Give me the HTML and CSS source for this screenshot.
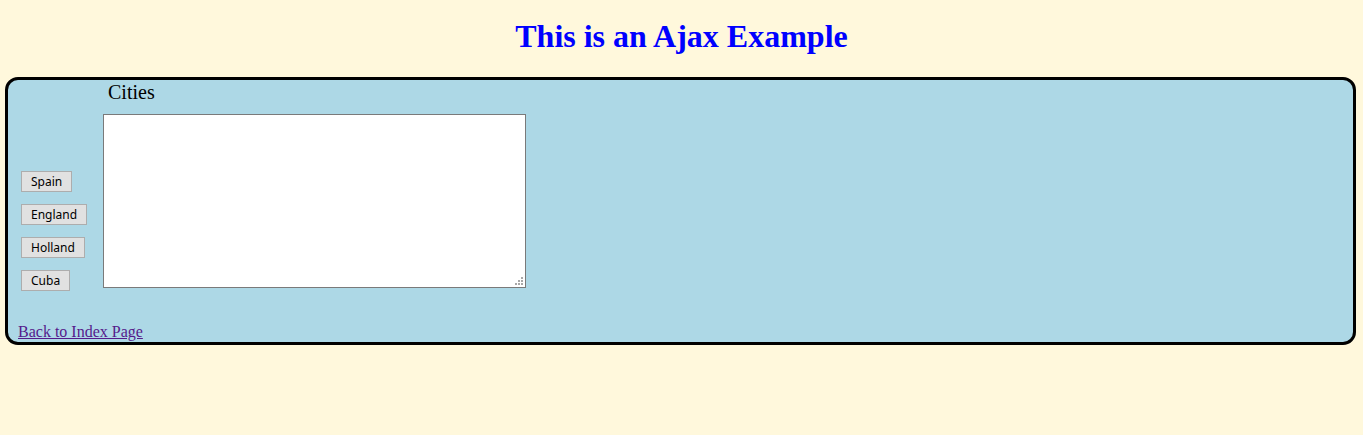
FILE: index.html
```html
<!DOCTYPE html>
<html>
<head>
<meta charset="utf-8">
<title>Ajax Example</title>
<link rel="stylesheet" href="styles.css">
</head>
<body>
<h1 class="title">This is an Ajax Example</h1>
<div class="panel">
  <div class="row">
    <div class="buttons">
      <button class="btn" type="button">Spain</button>
      <button class="btn" type="button">England</button>
      <button class="btn" type="button">Holland</button>
      <button class="btn" type="button">Cuba</button>
    </div>
    <div class="cities">
      <div class="label">Cities</div>
      <div class="box-wrap">
        <textarea class="box"></textarea>
        <svg class="grip" width="9" height="9" viewBox="0 0 9 9" aria-hidden="true">
          <rect x="7" y="1" width="2" height="2" fill="#a8a8a8"/>
          <rect x="4" y="4" width="2" height="2" fill="#a8a8a8"/>
          <rect x="7" y="4" width="2" height="2" fill="#a8a8a8"/>
          <rect x="1" y="7" width="2" height="2" fill="#a8a8a8"/>
          <rect x="4" y="7" width="2" height="2" fill="#a8a8a8"/>
          <rect x="7" y="7" width="2" height="2" fill="#a8a8a8"/>
        </svg>
      </div>
    </div>
  </div>
  <a class="back" href="#">Back to Index Page</a>
</div>
</body>
</html>
```
FILE: styles.css
```css
html, body {
  margin: 0;
  padding: 0;
  background: #fff8dc;
  font-family: "Liberation Serif", "Times New Roman", serif;
}
.title {
  margin: 18px 0 22px;
  font-size: 32px;
  line-height: 37px;
  font-weight: bold;
  text-align: center;
  color: #0000ff;
}
.panel {
  box-sizing: border-box;
  width: 1351px;
  height: 268px;
  margin-left: 5px;
  background: #add8e6;
  border: 3px solid #000;
  border-radius: 13px;
  padding: 0 0 4px 0;
}
.row {
  display: flex;
  align-items: flex-start;
}
.buttons {
  box-sizing: border-box;
  width: 95px;
  padding: 91px 0 0 13px;
  display: flex;
  flex-direction: column;
  align-items: flex-start;
  gap: 12px;
}
.btn {
  box-sizing: border-box;
  height: 21px;
  margin: 0;
  padding: 0 9px;
  font-family: "Noto Sans", "DejaVu Sans", sans-serif;
  font-size: 12px;
  line-height: 19px;
  color: #000;
  background: #e1e1e1;
  border: 1px solid #adadad;
  border-radius: 0;
}
.cities {
  display: flex;
  flex-direction: column;
}
.label {
  font-size: 20px;
  line-height: 20px;
  padding: 2px 0 0 5px;
}
.box-wrap {
  position: relative;
  margin-top: 12px;
}
.box {
  box-sizing: border-box;
  width: 423px;
  height: 174px;
  margin: 0;
  padding: 2px;
  border: 1px solid #7a7a7a;
  background: #fff;
  display: block;
  resize: none;
}
.grip {
  position: absolute;
  right: 3px;
  bottom: 3px;
}
.back {
  display: inline-block;
  margin: 32px 0 0 10px;
  font-size: 16px;
  line-height: 18px;
  color: #551a8b;
  text-decoration: underline;
}
```
